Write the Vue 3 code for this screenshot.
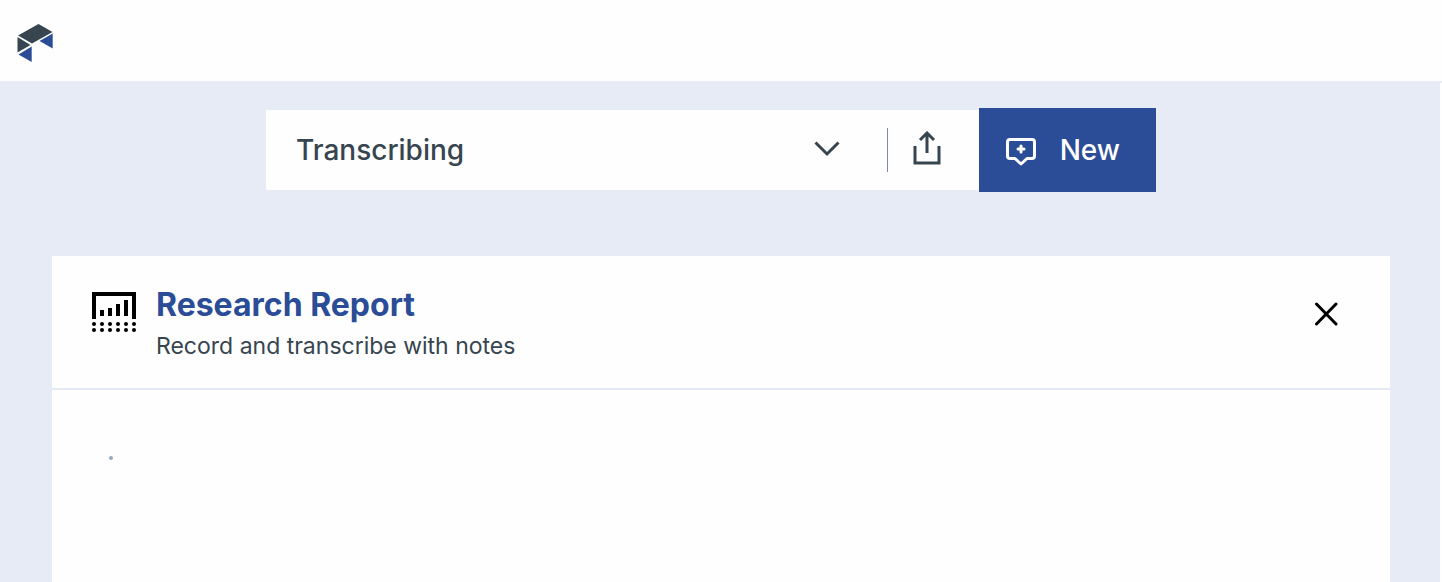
<script setup>
import { ref } from 'vue'

const mode = ref('Transcribing')
const bars = [
  { x: 8, h: 6 },
  { x: 16, h: 8 },
  { x: 24, h: 12 },
  { x: 32, h: 16 },
]
const dots = [2, 10, 18, 26, 34, 42]
</script>

<template>
  <div class="page">
    <header class="topbar">
      <a href="#" class="logo" aria-label="Home">
        <svg width="36" height="38" viewBox="0 0 36 38" aria-hidden="true">
          <path class="dark" d="M21.500 0L35.500 8L15 19.500L1 11.500Z" />
          <path class="dark" d="M.5 13L13.500 21L.5 28.500Z" />
          <path class="blue" d="M35.700 9.500V24.500L22.500 17Z" />
          <path class="blue" d="M14.700 22.500V38L1.500 30.500Z" />
        </svg>
      </a>
    </header>

    <main class="content">
      <div class="toolbar">
        <div class="picker">
          <select v-model="mode" class="select" aria-label="Mode">
            <option>Transcribing</option>
          </select>
          <svg class="chevron" width="26" height="16" viewBox="0 0 26 16" aria-hidden="true">
            <path d="M1.500 1.500L13 13L24.500 1.500" />
          </svg>
        </div>
        <span class="divider"></span>
        <button type="button" class="share" aria-label="Share">
          <svg width="28" height="34" viewBox="0 0 28 34" aria-hidden="true">
            <path d="M2 15V32H26V15M14 22V2M7 9L14 2L21 9" />
          </svg>
        </button>
        <button type="button" class="new">
          <svg width="30" height="28" viewBox="0 0 30 28" aria-hidden="true">
            <path
              d="M4 1.500H26Q28.500 1.500 28.500 4V18Q28.500 20.500 26 20.500H21L15 26L9 20.500H4Q1.500 20.500 1.500 18V4Q1.500 1.500 4 1.500Z"
            />
            <path class="plus" d="M15 8V14M12 11H18" />
          </svg>
          <span>New</span>
        </button>
      </div>

      <section class="card">
        <div class="card-head">
          <svg class="report" width="44" height="40" viewBox="0 0 44 40" aria-hidden="true">
            <path d="M0 27V0H44V27H40V4H4V27Z" />
            <rect v-for="bar in bars" :key="bar.x" :x="bar.x" :y="24 - bar.h" width="4" :height="bar.h" />
            <template v-for="x in dots" :key="x">
              <circle :cx="x" cy="32" r="2" />
              <circle :cx="x" cy="38" r="2" />
            </template>
          </svg>
          <div class="titles">
            <h1>Research Report</h1>
            <p>Record and transcribe with notes</p>
          </div>
          <button type="button" class="close" aria-label="Close">
            <svg width="24" height="24" viewBox="0 0 24 24" aria-hidden="true">
              <path d="M2.500 2L22 22M22 2L2.500 22" />
            </svg>
          </button>
        </div>
        <div class="card-body">
          <span class="pulse"></span>
        </div>
      </section>
    </main>
  </div>
</template>

<style>
body {
  margin: 0;
}
</style>

<style scoped>
.page {
  min-height: 100vh;
  display: flex;
  flex-direction: column;
  background: #fefefe;
  color: #36454f;
  font-family: Inter, "Liberation Sans", sans-serif;
}
button {
  border: 0;
  padding: 0;
  background: none;
  color: inherit;
  font: inherit;
  cursor: pointer;
}
svg {
  display: block;
  flex: none;
}
.topbar {
  padding: 24px 17px 19px;
  border-bottom: 2px solid #e7ebf5;
}
.logo {
  display: inline-block;
  vertical-align: top;
}
.dark {
  fill: #36454f;
}
.blue {
  fill: #2b4c96;
}
.content {
  flex: 1;
  display: flex;
  flex-direction: column;
  margin-right: 2px;
  padding: 25px 50px 0 52px;
  background: #e7ebf5;
}
.toolbar {
  display: flex;
  align-items: center;
  width: calc(100% - 20px);
  max-width: 890px;
  align-self: center;
  margin-right: 20px;
  background: linear-gradient(#fefefe, #fefefe) left center / 100% 80px no-repeat;
}
.picker {
  flex: 1;
  display: grid;
  align-items: center;
}
.select {
  grid-area: 1 / 1;
  appearance: none;
  width: 100%;
  height: 80px;
  padding: 0 30px;
  border: 0;
  border-radius: 0;
  background: transparent;
  color: inherit;
  font: 500 28px/40px Inter, "Liberation Sans", sans-serif;
}
.chevron {
  grid-area: 1 / 1;
  justify-self: end;
  margin: 0 47px 2px 0;
  pointer-events: none;
}
.chevron path,
.share path {
  fill: none;
  stroke: #36454f;
  stroke-width: 3;
}
.divider {
  width: 1px;
  height: 44px;
  background: #7c88ae;
}
.share {
  display: flex;
  justify-content: center;
  padding: 0 38px 4px 25px;
}
.new {
  display: flex;
  align-items: center;
  gap: 24px;
  height: 84px;
  padding: 0 36px 0 27px;
  background: #2b4c96;
  color: #fefefe;
  font-size: 28px;
  font-weight: 500;
}
.new svg {
  margin-top: 4px;
}
.new path {
  fill: none;
  stroke: #fefefe;
  stroke-width: 3;
  stroke-linejoin: round;
}
.new .plus {
  stroke-linecap: round;
}
.card {
  flex: 1;
  margin-top: 64px;
  background: #fefefe;
}
.card-head {
  display: flex;
  align-items: flex-start;
  padding: 28px 52px 22px 40px;
  border-bottom: 2px solid #e4eaf3;
}
.report {
  margin: 8px 20px 0 0;
}
.titles {
  flex: 1;
}
h1,
p {
  margin: 0;
}
h1 {
  color: #2b4c96;
  font-size: 32px;
  font-weight: 700;
  line-height: 42px;
}
p {
  font-size: 23px;
  line-height: 40px;
}
.close {
  margin-top: 18px;
}
.close path {
  stroke: #000;
  stroke-width: 3;
  stroke-linecap: round;
}
.card-body {
  padding: 66px 57px;
}
.pulse {
  display: block;
  width: 4px;
  height: 4px;
  border-radius: 50%;
  background: #98a5c4;
}
</style>
